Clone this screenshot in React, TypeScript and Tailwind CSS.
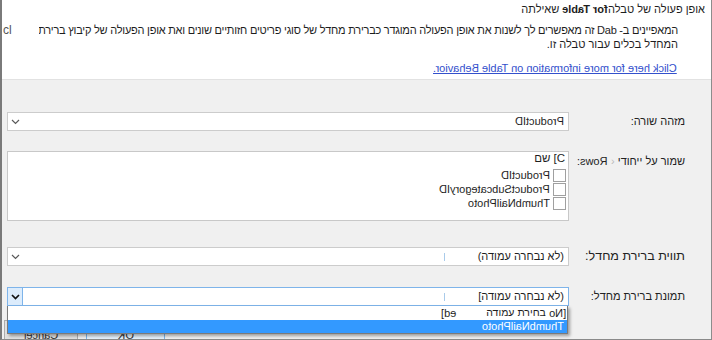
import React from "react";

// latin text of the flipped dialog: the whole run is mirrored
function M({ t, className = "" }: { t: string; className?: string }) {
  return (
    <span
      dir="ltr"
      className={"inline-block whitespace-pre [unicode-bidi:isolate] [transform:scaleX(-1)] " + className}
    >
      {t}
    </span>
  );
}

function Chevron({ dark }: { dark?: boolean }) {
  return (
    <svg width="9" height="6" viewBox="0 0 9 6">
      <path
        d="M1 1l3.5 3.5L8 1"
        fill="none"
        stroke={dark ? "#111" : "#5a5a5a"}
        strokeWidth={dark ? 1.7 : 1.2}
      />
    </svg>
  );
}

function Select({ children, focused }: { children: React.ReactNode; focused?: boolean }) {
  return (
    <div
      className={`flex h-[19px] w-[562px] items-center border bg-white ${
        focused ? "border-[#7eb4ea]" : "border-[#cccccc]"
      }`}
    >
      {focused ? (
        <div className="flex h-full w-[15px] items-center justify-center border-r border-[#7eb4ea] bg-[#dcecfc]">
          <Chevron dark />
        </div>
      ) : (
        <div className="flex w-[15px] justify-center">
          <Chevron />
        </div>
      )}
      <div className="flex flex-1 items-center justify-end pr-[4px]">{children}</div>
    </div>
  );
}

function Label({ children, className = "" }: { children: React.ReactNode; className?: string }) {
  return (
    <div dir="rtl" className={"flex-1 pr-[26px] text-right text-[11px] text-[#222] " + className}>
      {children}
    </div>
  );
}

function Check({ t }: { t: string }) {
  return (
    <div className="flex h-[14px] items-center justify-end gap-[3px]">
      <M t={t} />
      <span className="h-[13px] w-[13px] border border-[#a0a0a0] bg-white" />
    </div>
  );
}

export default function App() {
  return (
    <div className="relative h-[340px] w-[712px] overflow-hidden border-b border-l-2 border-r border-b-[#8a8a8a] border-l-[#7a7a7a] border-r-[#8c8c8c] bg-[#f0f0f0] font-['Liberation_Sans','DejaVu_Sans',sans-serif] text-[#1e1e1e]">
      {/* header */}
      <div className="h-[80px] border-b border-[#e2e2e2] bg-white">
        <div dir="rtl" className="pr-[6px] pt-[2px] text-[11px] leading-[14px]">
          אופן פעולה של טבלה
          <M t="for Table" className="font-bold" /> שאילתה
        </div>
        <div className="mt-[7px] flex items-center pr-[33px] leading-[15px]">
          <span className="ml-[1px] w-[36px] text-[12px] text-[#555]">cl</span>
          <div dir="rtl" className="flex-1 overflow-hidden whitespace-nowrap text-right text-[11px] tracking-[-0.24px]">
            המאפיינים ב- Dab זה מאפשרים לך לשנות את אופן הפעולה המוגדר כברירת מחדל של סוגי פריטים חזותיים שונים ואת אופן הפעולה של קיבוץ ברירת
          </div>
        </div>
        <div dir="rtl" className="pr-[33px] text-[11px] leading-[13px]">
          המחדל בכלים עבור טבלה זו.
        </div>
        <div dir="rtl" className="mt-[11px] pr-[34px] text-[11px] leading-[13px]">
          <a className="text-[#3350cc] underline">
            <M t="Click here for more information on Table Behavior." className="underline" />
          </a>
        </div>
      </div>

      {/* fields */}
      <div className="flex flex-col pl-[5px] text-[11px]">
        <div className="mt-[32px] flex items-center">
          <Select>
            <M t="ProductID" />
          </Select>
          <Label>מזהה שורה:</Label>
        </div>

        <div className="mt-[20px] flex items-start">
          <div className="h-[70px] w-[562px] border border-[#c8c8c8] bg-white pr-[2px]">
            <div dir="ltr" className="flex h-[13px] items-center justify-end pr-[1px] text-[11.5px]">
              <span>שם</span>
              <span className="ml-[3px]">[C</span>
            </div>
            <div className="mt-[3px]">
              <Check t="ProductID" />
              <Check t="ProductSubcategoryID" />
              <Check t="ThumbNailPhoto" />
            </div>
          </div>
          <Label className="mt-[4px] leading-[13px]">
            שמור על ייחודי <span className="text-[#bbb]">‹</span> <M t="Rows:" />
          </Label>
        </div>

        <div className="mt-[26px] flex items-center">
          <Select>
            <span className="h-[8px] w-px bg-[#a9cbea]" />
            <span dir="rtl" className="ml-[33px]">
              (לא נבחרה עמודה)
            </span>
          </Select>
          <Label className="text-[12.5px]">תווית ברירת מחדל:</Label>
        </div>

        <div className="mt-[21px] flex items-center">
          <div className="relative z-10">
            <Select focused>
              <span className="h-[8px] w-px bg-[#a9cbea]" />
              <span dir="rtl" className="ml-[33px]">
                (לא נבחרה עמודה]
              </span>
            </Select>
            <div className="absolute left-0 top-full w-[561px] border border-t-0 border-[#7a7a7a] bg-white shadow-[2px_2px_3px_rgba(0,0,0,0.35)]">
              <div dir="ltr" className="flex h-[14px] items-center justify-end pr-[1px] text-[10.5px]">
                <M t="ed]" className="mr-[30px] text-[11px]" />
                <span dir="rtl">בחירת עמודה</span>
                <M t="[No" className="ml-[3px] text-[11px]" />
              </div>
              <div className="flex h-[13px] items-center justify-end bg-[#3399ff] pr-[3px] text-white">
                <M t="ThumbNailPhoto" />
              </div>
            </div>
          </div>
          <Label>תמונת ברירת מחדל:</Label>
        </div>

        {/* dialog buttons, mostly hidden under the open list */}
        <div className="ml-[-3px] mt-[14px] flex gap-[8px] text-[#333]">
          <div className="flex h-[26px] w-[74px] items-end justify-center border border-[#adadad] bg-[#e1e1e1] pb-[2px]">
            <M t="Cancel" />
          </div>
          <div className="flex h-[26px] w-[79px] items-end justify-center border border-[#7eb4ea] bg-[#e5f1fb] pb-[2px]">
            <M t="OK" />
          </div>
        </div>
      </div>
    </div>
  );
}
